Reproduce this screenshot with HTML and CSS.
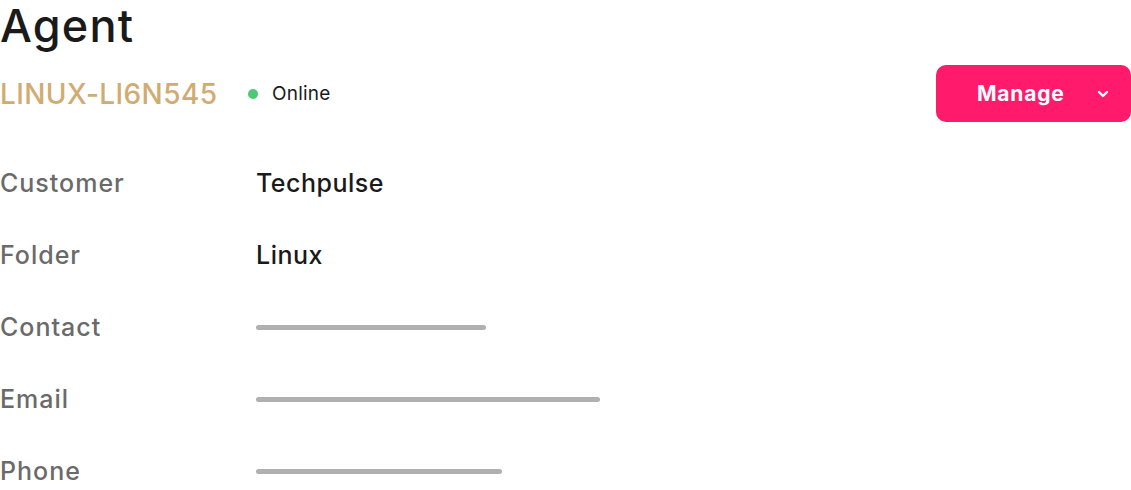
FILE: index.html
```html
<!DOCTYPE html>
<html>
<head>
<meta charset="utf-8">
<link rel="stylesheet" href="styles.css">
</head>
<body>
<div class="page">
  <h1 class="title">Agent</h1>
  <div class="header">
    <div class="agent-id">LINUX-LI6N545</div>
    <div class="status"><span class="dot"></span>Online</div>
    <button class="manage">Manage
      <svg class="chev" width="12" height="8" viewBox="0 0 12 8"><path d="M2 2 L6 6 L10 2" fill="none" stroke="#fff" stroke-width="2.4" stroke-linecap="round" stroke-linejoin="round"/></svg>
    </button>
  </div>
  <div class="rows">
    <div class="row"><div class="label">Customer</div><div class="value">Techpulse</div></div>
    <div class="row"><div class="label">Folder</div><div class="value">Linux</div></div>
    <div class="row"><div class="label">Contact</div><div class="value"><span class="bar" style="width:230px"></span></div></div>
    <div class="row"><div class="label">Email</div><div class="value"><span class="bar" style="width:344px"></span></div></div>
    <div class="row"><div class="label">Phone</div><div class="value"><span class="bar" style="width:246px"></span></div></div>
  </div>
</div>
</body>
</html>
```
FILE: styles.css
```css
html, body {
  margin: 0;
  padding: 0;
  background: #fff;
}
body {
  font-family: Inter, "Noto Sans", sans-serif;
  color: #1a1a1a;
}
.page {
  width: 1131px;
}
.title {
  margin: 0;
  font-size: 45px;
  font-weight: 500;
  line-height: 52px;
  letter-spacing: 1.2px;
  color: #1a1a1a;
}
.header {
  display: flex;
  align-items: center;
  height: 57px;
  margin-top: 13px;
}
.agent-id {
  font-size: 28px;
  font-weight: 500;
  color: #d0ac72;
  width: 248px;
  letter-spacing: 0.4px;
}
.status {
  display: flex;
  align-items: center;
  font-size: 19px;
  color: #1a1a1a;
  letter-spacing: 0.2px;
}
.dot {
  width: 10px;
  height: 10px;
  border-radius: 50%;
  background: #4fc876;
  margin-right: 14px;
}
.manage {
  margin-left: auto;
  width: 195px;
  height: 57px;
  border: 0;
  border-radius: 10px;
  background: #ff1a6c;
  color: #fff;
  font-family: inherit;
  font-size: 21px;
  font-weight: 700;
  letter-spacing: 0.8px;
  display: flex;
  align-items: center;
  padding: 0 22px 0 41px;
}
.chev {
  margin-left: auto;
}
.rows {
  margin-top: 25px;
}
.row {
  display: flex;
  align-items: center;
  height: 72px;
}
.label {
  width: 256px;
  font-size: 25px;
  font-weight: 500;
  letter-spacing: 1px;
  color: #6a6a6a;
}
.value {
  font-size: 25px;
  font-weight: 500;
  letter-spacing: 0.5px;
  color: #1a1a1a;
  display: flex;
  align-items: center;
}
.bar {
  display: block;
  height: 5px;
  border-radius: 3px;
  background: #b0b0b0;
}
```
